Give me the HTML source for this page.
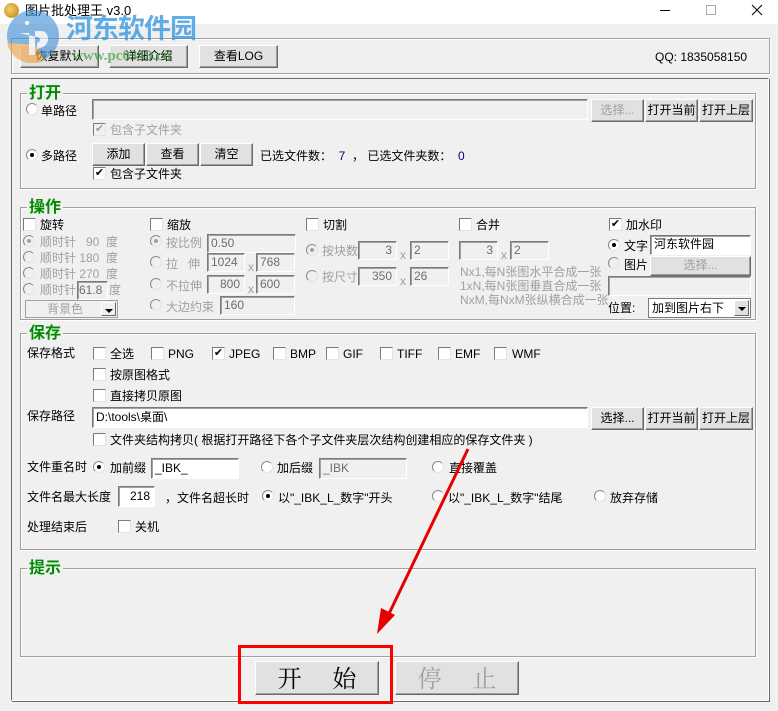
<!DOCTYPE html>
<html><head><meta charset="utf-8">
<style>
*{box-sizing:border-box;margin:0;padding:0}
body{width:778px;height:711px;background:#f0f0f0;position:relative;overflow:hidden;font-family:"Liberation Sans","Noto Sans CJK SC",sans-serif;font-size:12px;color:#000}
.a{position:absolute;white-space:nowrap;line-height:14px}
.g{color:#a0a0a0}
.btn{position:absolute;background:#e1e1e1;border:1px solid #fff;border-right-color:#696969;border-bottom-color:#696969;box-shadow:inset -1px -1px 0 #a0a0a0;text-align:center;font-size:12px;white-space:nowrap}
.btn.d{color:#a0a0a0}
.box{position:absolute;border:1px solid #a0a0a0;box-shadow:1px 1px 0 #fff, inset 1px 1px 0 #fff}
.grp{position:absolute;border:1px solid #a0a0a0;box-shadow:1px 1px 0 #fff,inset 1px 1px 0 #fff}
.gt{position:absolute;background:#f0f0f0;color:#008c00;font-weight:bold;font-size:16px;line-height:18px;padding:0 2px}
.in{position:absolute;background:#fff;border:1px solid #7a7a7a;border-right-color:#fff;border-bottom-color:#fff;box-shadow:inset 1px 1px 0 #a0a0a0;font-size:12px;line-height:18px;padding-left:3px;white-space:nowrap;overflow:hidden}
.in.d{background:#f0f0f0;color:#6d6d6d}
.r{text-align:right;padding-right:4px}
.cb{position:absolute;width:13px;height:13px;background:#fff;border:1px solid #7a7a7a;border-right-color:#e3e3e3;border-bottom-color:#e3e3e3;font-size:11px;line-height:11px;text-align:center}
.cb.d{background:#f0f0f0;color:#a0a0a0}
.rd{position:absolute;width:12px;height:12px;border-radius:50%;background:#fff;border:1px solid #8a8a8a;border-right-color:#e3e3e3;border-bottom-color:#e3e3e3}
.rd.d{background:#f0f0f0}
.rd.on::after{content:"";position:absolute;left:3px;top:3px;width:4px;height:4px;border-radius:50%;background:#000}
.rd.d.on::after{background:#a0a0a0}
.cmb{position:absolute;background:#fff;border:1px solid #7a7a7a;font-size:12px;line-height:16px;padding-left:3px}
.cmb i{position:absolute;right:1px;top:1px;width:15px;bottom:1px;background:#e1e1e1;border:1px solid #fff;border-right-color:#696969;border-bottom-color:#696969}
.cmb i::after{content:"";position:absolute;left:3px;top:6px;border:4px solid transparent;border-top:4px solid #000;border-bottom:0}
</style></head><body>
<div style="position:absolute;left:0;top:0;width:778px;height:24px;background:#fff"></div>
<div style="position:absolute;left:4px;top:3px;width:15px;height:15px;border-radius:50%;background:radial-gradient(circle at 40% 40%,#f8d070,#c07a10)"></div>
<div class="a" style="left:25px;top:3px;font-size:13px;line-height:16px">图片批处理王 v3.0</div>
<div style="position:absolute;left:660px;top:10px;width:10px;height:1px;background:#000"></div>
<div style="position:absolute;left:706px;top:5px;width:10px;height:10px;border:1px solid #aaa"></div>
<svg style="position:absolute;left:751px;top:4px" width="12" height="12"><path d="M1 1L11 11M11 1L1 11" stroke="#000" stroke-width="1"/></svg>

<div class="box" style="left:11px;top:38px;width:759px;height:36px"></div>
<div class="btn" style="left:20px;top:45px;width:79px;height:23px;line-height:20px">恢复默认</div>
<div class="btn" style="left:109px;top:45px;width:79px;height:23px;line-height:20px">详细介绍</div>
<div class="btn" style="left:199px;top:45px;width:79px;height:23px;line-height:20px">查看LOG</div>
<div class="a" style="left:655px;top:50px;font-size:12px">QQ: 1835058150</div>

<svg style="position:absolute;left:5px;top:9px;opacity:.6" width="58" height="54"><circle cx="28" cy="27" r="26" fill="#3d8fd8"/><path d="M2 34 A26 26 0 0 0 40 51 L30 36Z" fill="#f0a040"/><path d="M14 24h10v22h6V22h6c8 0 10 12 2 16l-6 2v-6c4-1 4-6 0-6" fill="#fff" opacity=".9"/><circle cx="22" cy="14" r="2" fill="#fff"/></svg>
<div class="a" style="left:66px;top:13px;font-size:27px;line-height:32px;font-weight:bold;color:#3a9ae0;opacity:.8;letter-spacing:-1px">河东软件园</div>
<div class="a" style="left:72px;top:47px;font-size:15px;line-height:18px;font-weight:bold;color:#3ca03c;opacity:.7;font-family:'Liberation Serif',serif">www.pc0359.cn</div>

<div style="position:absolute;left:11px;top:78px;width:758px;height:623px;border:1px solid #696969;border-right-color:#fff;border-bottom-color:#fff;box-shadow:1px 1px 0 #696969"></div>

<div class="grp" style="left:20px;top:93px;width:736px;height:96px"></div>
<div class="gt" style="left:27px;top:85px">打开</div>
<div class="rd" style="left:26px;top:103px"></div><div class="a" style="left:41px;top:104px">单路径</div>
<div class="in d" style="left:92px;top:99px;width:496px;height:21px"></div>
<div class="btn d" style="left:591px;top:99px;width:53px;height:23px;line-height:20px">选择...</div>
<div class="btn" style="left:645px;top:99px;width:53px;height:23px;line-height:20px">打开当前</div>
<div class="btn" style="left:699px;top:99px;width:54px;height:23px;line-height:20px">打开上层</div>
<div class="cb d" style="left:93px;top:123px">✔</div><div class="a g" style="left:110px;top:123px">包含子文件夹</div>
<div class="rd on" style="left:26px;top:149px"></div><div class="a" style="left:41px;top:149px">多路径</div>
<div class="btn" style="left:92px;top:143px;width:53px;height:23px;line-height:20px">添加</div>
<div class="btn" style="left:146px;top:143px;width:53px;height:23px;line-height:20px">查看</div>
<div class="btn" style="left:200px;top:143px;width:53px;height:23px;line-height:20px">清空</div>
<div class="a" style="left:260px;top:149px">已选文件数：&nbsp;&nbsp;<span style="color:#000080">7</span>&nbsp;&nbsp;，&nbsp;已选文件夹数：&nbsp;&nbsp;<span style="color:#000080">0</span></div>
<div class="cb" style="left:93px;top:167px">✔</div><div class="a" style="left:110px;top:167px">包含子文件夹</div>

<div class="grp" style="left:20px;top:207px;width:736px;height:113px"></div>
<div class="gt" style="left:27px;top:199px">操作</div>
<div class="cb" style="left:23px;top:218px"></div><div class="a" style="left:40px;top:218px">旋转</div>
<div class="rd d on" style="left:23px;top:235px"></div><div class="a g" style="left:40px;top:235px">顺时针&nbsp;&nbsp;&nbsp;90&nbsp;&nbsp;度</div>
<div class="rd d" style="left:23px;top:251px"></div><div class="a g" style="left:40px;top:251px">顺时针 180&nbsp;&nbsp;度</div>
<div class="rd d" style="left:23px;top:267px"></div><div class="a g" style="left:40px;top:267px">顺时针 270&nbsp;&nbsp;度</div>
<div class="rd d" style="left:23px;top:283px"></div><div class="a g" style="left:40px;top:283px">顺时针</div>
<div class="in d" style="left:77px;top:281px;width:31px;height:19px;line-height:16px;padding-left:1px">61.8</div>
<div class="a g" style="left:109px;top:283px">度</div>
<div class="cmb" style="left:25px;top:300px;width:93px;height:18px;background:#f0f0f0;color:#a0a0a0;border-color:#a0a0a0;text-align:center;padding-right:16px">背景色<i style="background:#f0f0f0"></i></div>

<div class="cb" style="left:150px;top:218px"></div><div class="a" style="left:167px;top:218px">缩放</div>
<div class="rd d on" style="left:150px;top:235px"></div><div class="a g" style="left:166px;top:236px">按比例</div>
<div class="in d" style="left:207px;top:234px;width:89px;height:19px;line-height:16px">0.50</div>
<div class="rd d" style="left:150px;top:256px"></div><div class="a g" style="left:166px;top:257px">拉&nbsp;&nbsp;&nbsp;伸</div>
<div class="in d" style="left:207px;top:253px;width:38px;height:19px;line-height:16px">1024</div>
<div class="a g" style="left:248px;top:260px">x</div>
<div class="in d" style="left:256px;top:253px;width:39px;height:19px;line-height:16px">768</div>
<div class="rd d" style="left:150px;top:278px"></div><div class="a g" style="left:166px;top:279px">不拉伸</div>
<div class="in d r" style="left:207px;top:275px;width:38px;height:19px;line-height:16px">800</div>
<div class="a g" style="left:248px;top:282px">x</div>
<div class="in d" style="left:256px;top:275px;width:39px;height:19px;line-height:16px">600</div>
<div class="rd d" style="left:150px;top:299px"></div><div class="a g" style="left:166px;top:300px">大边约束</div>
<div class="in d" style="left:220px;top:296px;width:75px;height:19px;line-height:16px">160</div>

<div class="cb" style="left:306px;top:218px"></div><div class="a" style="left:323px;top:218px">切割</div>
<div class="rd d on" style="left:306px;top:244px"></div><div class="a g" style="left:322px;top:244px">按块数</div>
<div class="in d r" style="left:358px;top:241px;width:39px;height:19px;line-height:16px">3</div>
<div class="a g" style="left:400px;top:248px">x</div>
<div class="in d" style="left:410px;top:241px;width:39px;height:19px;line-height:16px">2</div>
<div class="rd d" style="left:306px;top:270px"></div><div class="a g" style="left:322px;top:270px">按尺寸</div>
<div class="in d r" style="left:358px;top:267px;width:39px;height:19px;line-height:16px">350</div>
<div class="a g" style="left:400px;top:274px">x</div>
<div class="in d" style="left:410px;top:267px;width:39px;height:19px;line-height:16px">26</div>

<div class="cb" style="left:459px;top:218px"></div><div class="a" style="left:476px;top:218px">合并</div>
<div class="in d r" style="left:459px;top:241px;width:39px;height:19px;line-height:16px">3</div>
<div class="a g" style="left:501px;top:248px">x</div>
<div class="in d" style="left:510px;top:241px;width:39px;height:19px;line-height:16px">2</div>
<div class="a g" style="left:460px;top:265px;line-height:14px">Nx1,每N张图水平合成一张<br>1xN,每N张图垂直合成一张<br>NxM,每NxM张纵横合成一张</div>

<div class="cb" style="left:609px;top:218px">✔</div><div class="a" style="left:626px;top:218px">加水印</div>
<div class="rd on" style="left:608px;top:239px"></div><div class="a" style="left:624px;top:239px">文字</div>
<div class="in" style="left:650px;top:235px;width:101px;height:20px;line-height:17px">河东软件园</div>
<div class="rd d" style="left:608px;top:257px"></div><div class="a" style="left:624px;top:258px">图片</div>
<div class="btn d" style="left:650px;top:256px;width:101px;height:20px;line-height:17px">选择...</div>
<div class="in d" style="left:608px;top:276px;width:143px;height:20px"></div>
<div class="a" style="left:608px;top:301px">位置:</div>
<div class="cmb" style="left:648px;top:298px;width:103px;height:20px;line-height:18px">加到图片右下<i></i></div>

<div class="grp" style="left:20px;top:333px;width:736px;height:217px"></div>
<div class="gt" style="left:27px;top:325px">保存</div>
<div class="a" style="left:27px;top:346px">保存格式</div>
<div class="cb" style="left:93px;top:347px"></div><div class="a" style="left:110px;top:347px">全选</div>
<div class="cb" style="left:151px;top:347px"></div><div class="a" style="left:168px;top:347px">PNG</div>
<div class="cb" style="left:212px;top:347px">✔</div><div class="a" style="left:229px;top:347px">JPEG</div>
<div class="cb" style="left:273px;top:347px"></div><div class="a" style="left:290px;top:347px">BMP</div>
<div class="cb" style="left:326px;top:347px"></div><div class="a" style="left:343px;top:347px">GIF</div>
<div class="cb" style="left:380px;top:347px"></div><div class="a" style="left:397px;top:347px">TIFF</div>
<div class="cb" style="left:438px;top:347px"></div><div class="a" style="left:455px;top:347px">EMF</div>
<div class="cb" style="left:494px;top:347px"></div><div class="a" style="left:512px;top:347px">WMF</div>
<div class="cb" style="left:93px;top:368px"></div><div class="a" style="left:110px;top:368px">按原图格式</div>
<div class="cb" style="left:93px;top:389px"></div><div class="a" style="left:110px;top:389px">直接拷贝原图</div>
<div class="a" style="left:27px;top:409px">保存路径</div>
<div class="in" style="left:92px;top:407px;width:496px;height:21px;line-height:18px">D:\tools\桌面\</div>
<div class="btn" style="left:591px;top:407px;width:53px;height:23px;line-height:20px">选择...</div>
<div class="btn" style="left:645px;top:407px;width:53px;height:23px;line-height:20px">打开当前</div>
<div class="btn" style="left:699px;top:407px;width:54px;height:23px;line-height:20px">打开上层</div>
<div class="cb" style="left:93px;top:433px"></div><div class="a" style="left:110px;top:433px">文件夹结构拷贝( 根据打开路径下各个子文件夹层次结构创建相应的保存文件夹 )</div>
<div class="a" style="left:27px;top:460px">文件重名时</div>
<div class="rd on" style="left:93px;top:461px"></div><div class="a" style="left:110px;top:461px">加前缀</div>
<div class="in" style="left:151px;top:458px;width:88px;height:21px;line-height:18px">_IBK_</div>
<div class="rd" style="left:261px;top:461px"></div><div class="a" style="left:277px;top:461px">加后缀</div>
<div class="in d" style="left:319px;top:458px;width:88px;height:21px;line-height:18px">_IBK</div>
<div class="rd" style="left:432px;top:461px"></div><div class="a" style="left:449px;top:461px">直接覆盖</div>
<div class="a" style="left:27px;top:490px">文件名最大长度</div>
<div class="in r" style="left:118px;top:486px;width:37px;height:21px;line-height:18px">218</div>
<div class="a" style="left:165px;top:491px">，文件名超长时</div>
<div class="rd on" style="left:262px;top:490px"></div><div class="a" style="left:278px;top:491px">以"_IBK_L_数字"开头</div>
<div class="rd" style="left:432px;top:490px"></div><div class="a" style="left:448px;top:491px">以"_IBK_L_数字"结尾</div>
<div class="rd" style="left:594px;top:490px"></div><div class="a" style="left:610px;top:491px">放弃存储</div>
<div class="a" style="left:27px;top:520px">处理结束后</div>
<div class="cb" style="left:118px;top:520px"></div><div class="a" style="left:135px;top:520px">关机</div>

<div class="grp" style="left:20px;top:568px;width:736px;height:89px"></div>
<div class="gt" style="left:27px;top:560px">提示</div>

<div class="btn" style="left:255px;top:661px;width:124px;height:34px;line-height:30px;font-size:24px;font-family:'Noto Serif CJK SC',serif">开&nbsp;&nbsp;&nbsp;&nbsp;&nbsp;始</div>
<div class="btn d" style="left:395px;top:661px;width:124px;height:34px;line-height:30px;font-size:24px;font-family:'Noto Serif CJK SC',serif">停&nbsp;&nbsp;&nbsp;&nbsp;&nbsp;止</div>
<div style="position:absolute;left:238px;top:645px;width:155px;height:59px;border:3px solid #f00"></div>

<svg style="position:absolute;left:0;top:0" width="778" height="711">
<line x1="468" y1="449" x2="386" y2="620" stroke="#e80000" stroke-width="3"/>
<polygon points="377,634 381,608 395,615" fill="#e80000"/>
</svg>
</body></html>
